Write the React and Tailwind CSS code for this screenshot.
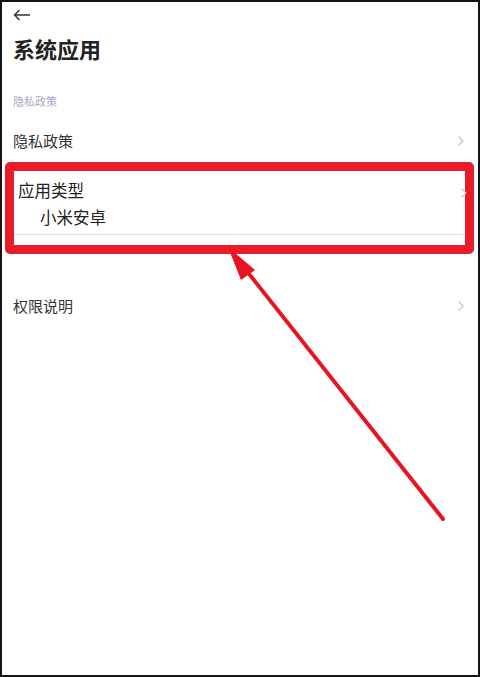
import React from "react";

function Chevron() {
  return (
    <svg width="8" height="12" viewBox="0 0 8 12" fill="none">
      <path d="M1.5 1.5 L6 6 L1.5 10.5" stroke="#c6c6c6" strokeWidth="1.3" />
    </svg>
  );
}

export default function App() {
  const font = { fontFamily: '"Noto Sans CJK SC", "Noto Sans", sans-serif' };

  return (
    <div
      className="relative w-[480px] h-[677px] bg-white border-2 border-[#141414] overflow-hidden"
      style={font}
    >
      <div className="h-[26px] flex items-center pl-[11px]">
        <svg width="18" height="12" viewBox="0 0 18 12" fill="none">
          <path d="M17 6 H1.5 M6.5 1 L1.5 6 L6.5 11" stroke="#333" strokeWidth="1.4" />
        </svg>
      </div>

      <h1 className="h-[40px] leading-[40px] pl-[11px] text-[22px] font-bold text-[#222]">
        系统应用
      </h1>

      <p className="mt-[23px] h-[20px] leading-[20px] pl-[11px] text-[11px] text-[#a7a9c4]">
        隐私政策
      </p>

      <div className="mt-[14px] h-[32px] flex items-center justify-between pl-[11px] pr-[13px]">
        <span className="text-[15px] text-[#333]">隐私政策</span>
        <Chevron />
      </div>

      <div className="mt-[5px] ml-[3px] mr-[4px] border-[9px] border-[#ea1b29] rounded-[5px]">
        <div className="relative pt-[7px] pl-[4px]">
          <div className="h-[24px] leading-[24px] text-[16.5px] text-[#222]">应用类型</div>
          <div className="h-[30px] leading-[30px] pl-[22px] text-[16.5px] text-[#222]">小米安卓</div>
          <div className="absolute right-[-3px] top-[16px]">
            <Chevron />
          </div>
        </div>
        <div className="mt-[2px] h-[11px] border-t border-[#e2e2e2]" />
      </div>

      <div className="mt-[37px] h-[30px] flex items-center justify-between pl-[11px] pr-[13px]">
        <span className="text-[15px] text-[#333]">权限说明</span>
        <Chevron />
      </div>

      <svg
        className="absolute left-[-2px] top-[-2px] pointer-events-none"
        width="480"
        height="677"
        viewBox="0 0 480 677"
      >
        <line x1="443" y1="519" x2="246" y2="270" stroke="#e8141f" strokeWidth="4" strokeLinecap="round" />
        <polygon points="228,247 255,270 241,280" fill="#e8141f" />
      </svg>
    </div>
  );
}
